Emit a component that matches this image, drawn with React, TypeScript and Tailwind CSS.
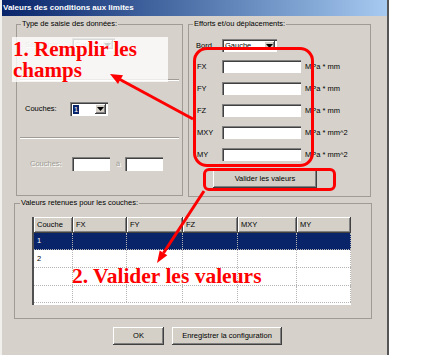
import type { ReactNode } from 'react'

const raised =
  'bg-[#d4d0c8] shadow-[inset_-1px_-1px_0_#404040,inset_1px_1px_0_#ffffff,inset_-2px_-2px_0_#808080]'
const sunken =
  'bg-white shadow-[inset_1px_1px_0_#808080,inset_2px_2px_0_#404040,inset_-1px_-1px_0_#ffffff]'
const disabledText = 'text-[#a09c95] [text-shadow:1px_1px_0_#ffffff]'

function DropArrow() {
  return (
    <svg width="7" height="4" viewBox="0 0 7 4">
      <path d="M0 0h7L3.5 4z" fill="#000" />
    </svg>
  )
}

function Combo({ className, children }: { className: string; children?: ReactNode }) {
  return (
    <div className={`flex items-stretch p-[2px] ${sunken} ${className}`}>
      <div className="flex min-w-0 flex-1 items-center overflow-hidden whitespace-nowrap pl-[1px]">{children}</div>
      <div className={`flex w-[11px] items-center justify-center ${raised}`}>
        <DropArrow />
      </div>
    </div>
  )
}

const columns = [
  { label: 'Couche', width: 'w-[39px]' },
  { label: 'FX', width: 'w-[54px]' },
  { label: 'FY', width: 'w-[56px]' },
  { label: 'FZ', width: 'w-[55px]' },
  { label: 'MXY', width: 'w-[59px]' },
  { label: 'MY', width: 'w-[54px]' },
]

const rows = [
  { id: 'r1', height: 'h-[17px]', text: '1', selected: true },
  { id: 'r2', height: 'h-[18px]', text: '2', selected: false },
  { id: 'r3', height: 'h-[18px]', text: '', selected: false },
  { id: 'r4', height: 'h-[17px]', text: '', selected: false },
]

const efforts = [
  { label: 'FX', unit: 'MPa * mm' },
  { label: 'FY', unit: 'MPa * mm' },
  { label: 'FZ', unit: 'MPa * mm' },
  { label: 'MXY', unit: 'MPa * mm^2' },
  { label: 'MY', unit: 'MPa * mm^2' },
]

export default function App() {
  return (
    <div className="relative h-[355px] w-[438px] overflow-hidden bg-white font-['Liberation_Sans',Arial,sans-serif] text-[7.5px] text-black">
      <div className="h-[355px] w-[389px] bg-[#d6d2cb] shadow-[inset_2px_0_0_#f2f0ec,inset_-2px_0_0_#555555]">
        <div className="mx-[2px] flex h-[16px] items-center bg-linear-to-r from-[#0a246a] to-[#a6caf0] pl-[1px] text-[8px] font-bold text-white">
          Valeurs des conditions aux limites
        </div>

        <div className="mt-[3px] flex items-start">
          <fieldset className="ml-[16px] h-[177px] w-[167px] border border-[#a09c95]">
            <legend className="ml-[4px] px-[1px] leading-[10px]">Type de saisie des données:</legend>
            <div className="mt-[9px] flex h-[13px] items-center pl-[8px]">
              <span className={`w-[47px] ${disabledText}`}>Saisie par:</span>
              <Combo className="h-[13px] w-[43px]">
                <span className={disabledText}>Couches</span>
              </Combo>
            </div>
            <div className="mx-[3px] mt-[28px] h-[2px] border-t border-b border-t-[#a09c95] border-b-white" />
            <div className="mt-[21px] flex h-[14px] items-center pl-[8px]">
              <span className="w-[45px]">Couches:</span>
              <Combo className="h-[14px] w-[38px]">
                <span className="bg-[#0a246a] px-[1px] leading-[9px] text-white">1</span>
              </Combo>
            </div>
            <div className="mx-[3px] mt-[21px] h-[2px] border-t border-b border-t-[#a09c95] border-b-white" />
            <div className="mt-[18px] flex h-[14px] items-center pl-[13px]">
              <span className={`w-[42px] ${disabledText}`}>Couches:</span>
              <div className={`h-[14px] w-[38px] ${sunken}`} />
              <span className={`w-[15px] pl-[6px] ${disabledText}`}>à</span>
              <div className={`h-[14px] w-[38px] ${sunken}`} />
            </div>
          </fieldset>

          <fieldset className="ml-[5px] h-[178px] w-[183px] border border-[#a09c95]">
            <legend className="ml-[4px] px-[1px] leading-[10px]">Efforts et/ou déplacements:</legend>
            <div className="mt-[10px] flex h-[13px] items-center pl-[7px]">
              <span className="w-[26px]">Bord</span>
              <Combo className="h-[13px] w-[55px]">Gauche</Combo>
            </div>
            <div className="mt-[8px] flex flex-col gap-[9px]">
              {efforts.map((row) => (
                <div key={row.label} className="flex h-[13px] items-center pl-[8px]">
                  <span className="w-[25px]">{row.label}</span>
                  <div className={`h-[13px] w-[79px] ${sunken}`} />
                  <span className="ml-[4px] whitespace-nowrap">{row.unit}</span>
                </div>
              ))}
            </div>
            <button
              type="button"
              className={`ml-[24px] mt-[9px] flex h-[18px] w-[104px] items-center justify-center ${raised}`}
            >
              Valider les valeurs
            </button>
          </fieldset>
        </div>

        <fieldset className="ml-[14px] mt-[1px] h-[121px] w-[358px] border border-[#a09c95]">
          <legend className="ml-[5px] px-[1px] leading-[10px]">Valeurs retenues pour les couches:</legend>
          <div className="ml-[17px] mt-[9px] flex h-[88px] w-[319px] flex-col border-l-[2px] border-l-[#505050] bg-white">
            <div className="flex h-[16px]">
              {columns.map((col) => (
                <div key={col.label} className={`flex items-center pl-[3px] ${col.width} ${raised}`}>
                  {col.label}
                </div>
              ))}
            </div>
            {rows.map((row) => (
              <div
                key={row.id}
                className={`flex ${row.height} border-b border-dotted border-b-[#b4b4b4] ${
                  row.selected ? 'bg-[#0a246a] text-white' : ''
                }`}
              >
                {columns.map((col, i) => (
                  <div
                    key={col.label}
                    className={`flex items-center border-r border-dotted border-r-[#b4b4b4] pl-[3px] ${col.width}`}
                  >
                    {i === 0 ? row.text : ''}
                  </div>
                ))}
              </div>
            ))}
          </div>
        </fieldset>

        <div className="ml-[113px] mt-[8px] flex gap-[8px]">
          <button type="button" className={`flex h-[18px] w-[51px] items-center justify-center ${raised}`}>
            OK
          </button>
          <button type="button" className={`flex h-[18px] w-[110px] items-center justify-center ${raised}`}>
            Enregistrer la configuration
          </button>
        </div>
      </div>

      {/* annotations drawn over the dialog */}
      <div className="absolute left-[12px] top-[37px] h-[45px] w-[156px] bg-white/80 pl-[1px] pt-[2px] font-['Liberation_Serif',serif] text-[21px] font-bold leading-[21px] text-[#ff0000]">
        1. Remplir les
        <br />
        champs
      </div>
      <div className="absolute left-[72px] top-[265px] whitespace-nowrap font-['Liberation_Serif',serif] text-[21.5px] font-bold leading-[22px] text-[#ff0000]">
        2. Valider les valeurs
      </div>
      <div className="absolute left-[193px] top-[47px] h-[120px] w-[121px] rounded-[14px] border-[3px] border-[#ff0000]" />
      <div className="absolute left-[203px] top-[168px] h-[23px] w-[133px] rounded-[6px] border-[3px] border-[#ff0000]" />
      <svg className="pointer-events-none absolute inset-0" width="438" height="355" viewBox="0 0 438 355">
        <line x1="193" y1="119" x2="120" y2="79.5" stroke="#ff0000" strokeWidth="3" />
        <polygon points="110,74 123,75.3 118,84.1" fill="#ff0000" />
        <line x1="204" y1="191" x2="163.5" y2="253" stroke="#ff0000" strokeWidth="3" />
        <polygon points="157,263 167.3,255.3 159.7,250.5" fill="#ff0000" />
      </svg>
    </div>
  )
}
